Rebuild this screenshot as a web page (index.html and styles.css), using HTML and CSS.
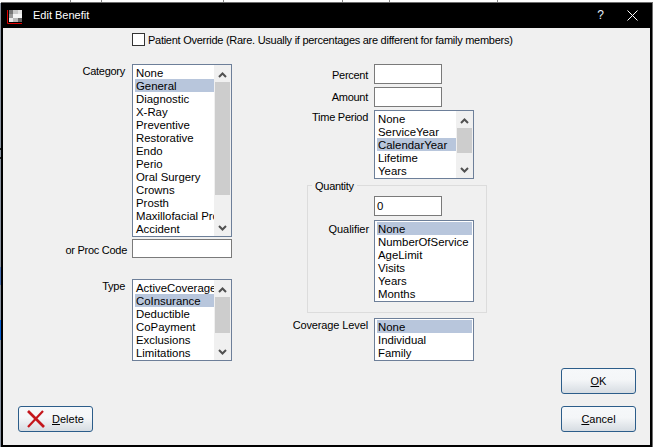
FILE: index.html
```html
<!DOCTYPE html>
<html lang="en">
<head>
<meta charset="utf-8">
<title>Edit Benefit</title>
<link rel="stylesheet" href="styles.css">
</head>
<body>
<div class="behind">
  <span class="cell c1"></span><span class="cell c2"></span><span class="cell c3"></span><span class="cell c4">Routine Preventive</span><span class="cell c5">100</span><span class="cell c6">0.00</span>
</div>
<div class="edge"></div>
<div class="window">
  <header class="titlebar">
    <svg class="app-icon" width="16" height="16" viewBox="0 0 16 16">
      <rect x="2" y="1" width="13" height="12" fill="#9a9a9a"/>
      <rect x="2" y="1" width="4" height="4" fill="#777"/>
      <rect x="6" y="1" width="5" height="4" fill="#c8c8c8"/>
      <rect x="11" y="1" width="4" height="4" fill="#e4e4e4"/>
      <rect x="2" y="5" width="4" height="4" fill="#999"/>
      <rect x="6" y="5" width="5" height="4" fill="#f4f4f4"/>
      <rect x="11" y="5" width="4" height="4" fill="#f4f4f4"/>
      <rect x="2" y="9" width="4" height="4" fill="#e8e8e8"/>
      <rect x="6" y="9" width="5" height="4" fill="#b8b8b8"/>
      <rect x="11" y="9" width="4" height="4" fill="#666"/>
      <path d="M0.5 1V14.5H15" fill="none" stroke="#e00000"/>
    </svg>
    <span class="title">Edit Benefit</span>
    <span class="help">?</span>
    <svg class="close" width="11" height="11" viewBox="0 0 11 11"><path d="M0.5 0.5L10.5 10.5M10.5 0.5L0.5 10.5" stroke="#fff" stroke-width="1"/></svg>
  </header>
  <main class="client">
    <div class="override">
      <span class="checkbox"></span>
      <span class="override-text">Patient Override (Rare. Usually if percentages are different for family members)</span>
    </div>
    <div class="columns">
      <section class="left">
        <div class="row">
          <label class="lab lab-l">Category</label>
          <div class="list h173">
            <ul class="items">
              <li>None</li><li class="sel">General</li><li>Diagnostic</li><li>X-Ray</li><li>Preventive</li><li>Restorative</li><li>Endo</li><li>Perio</li><li>Oral Surgery</li><li>Crowns</li><li>Prosth</li><li>Maxillofacial Prosth</li><li>Accident</li>
            </ul>
            <div class="sb"><svg class="up" width="9" height="6" viewBox="0 0 9 6"><path d="M1 5L4.5 1.5L8 5" fill="none" stroke="#505050" stroke-width="2"/></svg><div class="track"><div class="thumb t-cat"></div></div><svg class="dn" width="9" height="6" viewBox="0 0 9 6"><path d="M1 1L4.5 4.5L8 1" fill="none" stroke="#505050" stroke-width="2"/></svg></div>
          </div>
        </div>
        <div class="row proc-row">
          <label class="lab lab-p">or Proc Code</label>
          <div class="input wide"></div>
        </div>
        <div class="row type-row">
          <label class="lab lab-l">Type</label>
          <div class="list h82">
            <ul class="items">
              <li>ActiveCoverage</li><li class="sel">CoInsurance</li><li>Deductible</li><li>CoPayment</li><li>Exclusions</li><li>Limitations</li>
            </ul>
            <div class="sb"><svg class="up" width="9" height="6" viewBox="0 0 9 6"><path d="M1 5L4.5 1.5L8 5" fill="none" stroke="#505050" stroke-width="2"/></svg><div class="track"><div class="thumb t-type"></div></div><svg class="dn" width="9" height="6" viewBox="0 0 9 6"><path d="M1 1L4.5 4.5L8 1" fill="none" stroke="#505050" stroke-width="2"/></svg></div>
          </div>
        </div>
      </section>
      <section class="right">
        <div class="frow">
          <label class="lab lab-r">Percent</label>
          <div class="input narrow"></div>
        </div>
        <div class="frow f-amount">
          <label class="lab lab-r lab-a">Amount</label>
          <div class="input narrow"></div>
        </div>
        <div class="frow f-time">
          <label class="lab lab-r lab-top">Time Period</label>
          <div class="list h69">
            <ul class="items">
              <li>None</li><li>ServiceYear</li><li class="sel">CalendarYear</li><li>Lifetime</li><li>Years</li>
            </ul>
            <div class="sb"><svg class="up" width="9" height="6" viewBox="0 0 9 6"><path d="M1 5L4.5 1.5L8 5" fill="none" stroke="#505050" stroke-width="2"/></svg><div class="track"><div class="thumb t-time"></div></div><svg class="dn" width="9" height="6" viewBox="0 0 9 6"><path d="M1 1L4.5 4.5L8 1" fill="none" stroke="#505050" stroke-width="2"/></svg></div>
          </div>
        </div>
        <div class="group">
          <span class="legend">Quantity</span>
          <div class="grow g-qty">
            <span class="spacer"></span>
            <div class="input narrow value">0</div>
          </div>
          <div class="grow g-qual">
            <label class="lab lab-q">Qualifier</label>
            <div class="list h82">
              <ul class="items full">
                <li class="sel">None</li><li>NumberOfService</li><li>AgeLimit</li><li>Visits</li><li>Years</li><li>Months</li>
              </ul>
            </div>
          </div>
        </div>
        <div class="frow f-cov">
          <label class="lab lab-r lab-top lab-cov">Coverage Level</label>
          <div class="list h43">
            <ul class="items full">
              <li class="sel">None</li><li>Individual</li><li>Family</li>
            </ul>
          </div>
        </div>
      </section>
    </div>
    <div class="actions">
      <button class="btn delete" type="button">
        <svg class="x-icon" width="20" height="18" viewBox="0 0 20 18"><path d="M2 1L18 17" stroke="#c4161c" stroke-width="2.6"/><path d="M17 1L2 17" stroke="#c4161c" stroke-width="2.2"/></svg>
        <span><u>D</u>elete</span>
      </button>
      <div class="stack">
        <button class="btn" type="button"><u>O</u>K</button>
        <button class="btn" type="button"><u>C</u>ancel</button>
      </div>
    </div>
  </main>
</div>
</body>
</html>
```

FILE: styles.css
```css
* { box-sizing: border-box; }
html, body { margin: 0; padding: 0; }
body {
  width: 654px;
  height: 447px;
  overflow: hidden;
  position: relative;
  background: #fff;
  font: 11px/13px "Liberation Sans", Arial, sans-serif;
  letter-spacing: -0.27px;
  color: #000;
}
.behind {
  position: absolute;
  left: 0;
  top: -11px;
  width: 654px;
  height: 13px;
  display: flex;
  color: #222;
}
.cell { border-right: 1px solid #888; height: 13px; white-space: nowrap; flex: none; }
.c1 { width: 71px; }
.c2 { width: 31px; }
.c3 { width: 122px; }
.c4 { width: 119px; padding-left: 41px; letter-spacing: -0.2px; font-size: 9px; }
.c5 { width: 47px; padding-left: 3px; }
.c6 { width: 108px; padding-left: 58px; }
.edge {
  position: absolute;
  left: 0;
  top: 3px;
  width: 1px;
  height: 444px;
  background: linear-gradient(#8a93a0 0 145px, #222 145px 147px, #8a93a0 147px 154px, #222 154px 156px, #8a93a0 156px 264px, #4a6fb0 264px 282px, #8a93a0 282px 317px, #0a5fd0 317px 337px, #8a93a0 337px);
}
.window {
  position: absolute;
  left: 1px;
  top: 2px;
  width: 652px;
  height: 445px;
  border-top: 1px solid #6e6e6e;
  border-right: 1px solid #6e6e6e;
  display: flex;
  flex-direction: column;
  background: #000;
}
.titlebar {
  height: 25px;
  flex: none;
  display: flex;
  align-items: center;
  color: #fff;
  padding-left: 6px;
}
.app-icon { margin-top: 3px; flex: none; }
.title { margin-left: 10px; flex: 1; letter-spacing: 0; }
.help { margin-right: 23px; font-size: 12px; color: #e6f2ff; letter-spacing: 0; }
.close { margin-right: 14px; margin-top: -1px; flex: none; }
.client {
  flex: none;
  width: 647px;
  height: 417px;
  margin-left: 2px;
  background: #f0f0f0;
  padding-top: 5px;
}
.override {
  display: flex;
  align-items: center;
  height: 13px;
  margin-left: 129px;
  gap: 3px;
  white-space: nowrap;
}
.override-text { margin-top: 2px; }
.checkbox {
  width: 13px;
  height: 13px;
  background: #fff;
  border: 1px solid #333;
  flex: none;
}
.columns {
  display: flex;
  margin-top: 18px;
  height: 297px;
}
.left { width: 242px; flex: none; }
.row { display: flex; align-items: flex-start; }
.lab { display: flex; justify-content: flex-end; white-space: nowrap; flex: none; }
.lab-l { width: 122px; margin-right: 7px; padding-top: 1px; }
.lab-p { width: 124px; margin-right: 5px; padding-top: 5px; }
.proc-row { margin-top: 2px; }
.type-row { margin-top: 21px; }
.input {
  background: #fff;
  border: 1px solid #7a7a7a;
  height: 20px;
  font-size: 11.4px;
  letter-spacing: 0;
}
.wide { width: 100px; height: 19px; }
.narrow { width: 68px; }
.list {
  width: 100px;
  display: flex;
  background: #fff;
  border: 1px solid #6d7f99;
  overflow: hidden;
  font-size: 11.4px;
  letter-spacing: 0;
}
.h173 { height: 173px; }
.h82 { height: 82px; }
.h69 { height: 69px; }
.h43 { height: 43px; }
.items {
  list-style: none;
  margin: 0;
  padding: 1px 0 0 2px;
  width: 81px;
  flex: none;
  overflow: hidden;
}
.items.full { width: 98px; padding-right: 1px; }
.items li {
  height: 13px;
  line-height: 14px;
  padding-left: 1px;
  white-space: nowrap;
  overflow: hidden;
}
.items .sel { background: #b8c6dc; }
.sb {
  width: 17px;
  flex: none;
  display: flex;
  flex-direction: column;
  align-items: center;
  background: #f0f0f0;
}
.up { margin: 7px 0 4px; flex: none; }
.dn { margin: 3px 0 5px; flex: none; }
.track { flex: 1; width: 15px; }
.thumb { width: 15px; background: #cdcdcd; }
.t-cat { height: 113px; }
.t-type { height: 36px; }
.t-time { height: 25px; }
.right { width: 195px; margin-left: 47px; flex: none; }
.frow { display: flex; align-items: flex-start; }
.lab-r { width: 76px; margin-right: 6px; padding-top: 5px; }
.lab-a { padding-top: 4px; }
.lab-top { padding-top: 1px; }
.lab-cov { letter-spacing: -0.12px; }
.f-amount { margin-top: 3px; }
.f-time { margin-top: 3px; }
.group {
  margin: 6px 0 0 15px;
  width: 180px;
  height: 128px;
  border: 1px solid #dcdcdc;
  position: relative;
}
.legend {
  position: absolute;
  left: 4px;
  top: -6px;
  height: 13px;
  padding: 0 3px;
  background: #f0f0f0;
  white-space: nowrap;
}
.grow { display: flex; align-items: flex-start; }
.spacer { width: 66px; flex: none; }
.g-qty { margin-top: 10px; }
.value { padding: 3px 2px; }
.g-qual { margin-top: 4px; }
.lab-q { width: 61px; margin-right: 5px; padding-top: 3px; letter-spacing: -0.05px; }
.f-cov { margin-top: 5px; }
.actions {
  display: flex;
  justify-content: space-between;
  align-items: flex-end;
  margin-top: 7px;
  padding: 0 14px 0 15px;
}
.stack { display: flex; flex-direction: column; gap: 12px; }
.btn {
  width: 75px;
  height: 26px;
  border: 1px solid #2c5d8a;
  border-radius: 3px;
  background: linear-gradient(#f6f8fa, #f4f6f8 45%, #d6dce2);
  font: inherit;
  letter-spacing: 0;
  color: #000;
  padding: 0;
  display: block;
}
.delete { display: flex; align-items: center; padding-left: 7px; gap: 6px; }
.x-icon { flex: none; }
```
